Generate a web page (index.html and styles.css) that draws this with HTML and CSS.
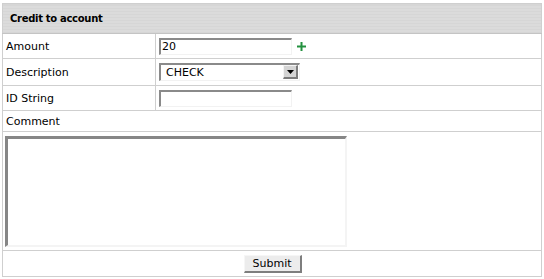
FILE: index.html
```html
<!DOCTYPE html>
<html>
  <head>
    <title>Credit to account</title>
    <link rel="stylesheet" href="styles.css">
  </head>
  <body>
    <form>
      <table class="credit">
        <tr class="head">
          <th colspan="2">Credit to account</th>
        </tr>
        <tr class="row">
          <td class="label"><label for="amount">Amount</label></td>
          <td>
            <input id="amount" class="field" name="amount" value="20" />
            <svg class="plus" width="9" height="9" viewBox="0 0 9 9"><path d="M3.5 0h2v3.5H9v2H5.5V9h-2V5.5H0v-2h3.5z" fill="#23913f"/></svg>
          </td>
        </tr>
        <tr class="row desc">
          <td class="label"><label for="description">Description</label></td>
          <td>
            <span class="select-wrap">
              <select id="description" name="description">
                <option>CHECK</option>
                <option>CASH</option>
              </select>
              <span class="arrow"><svg width="7" height="4" viewBox="0 0 7 4"><path d="M0 0h7L3.5 4z" fill="#000"/></svg></span>
            </span>
          </td>
        </tr>
        <tr class="row">
          <td class="label"><label for="idstring">ID String</label></td>
          <td><input id="idstring" class="field" name="idstring" /></td>
        </tr>
        <tr class="row small">
          <td class="label" colspan="2"><label for="comment">Comment</label></td>
        </tr>
        <tr class="area">
          <td colspan="2"><textarea id="comment" name="comment"></textarea></td>
        </tr>
        <tr class="row foot">
          <td colspan="2"><button type="button">Submit</button></td>
        </tr>
      </table>
    </form>
  </body>
</html>
```
FILE: styles.css
```css
* {
  font-family: "DejaVu Sans", Verdana, sans-serif;
  box-sizing: border-box;
}
body {
  margin: 3px 2px;
  background: #fff;
}
.credit {
  width: 540px;
  border-collapse: collapse;
  font-size: 11px;
  color: #000;
}
.credit td,
.credit th {
  border: 1px solid #cfcfcf;
  padding: 0;
  vertical-align: middle;
}
.head th {
  height: 30px;
  text-align: left;
  padding-left: 7px;
  font-size: 10px;
  font-weight: bold;
  letter-spacing: -0.3px;
  background: repeating-linear-gradient(to bottom, #d6d6d6 0, #d6d6d6 2px, #e0e0e0 2px, #e0e0e0 3px);
  border-bottom-color: #c4c4c4;
}
.row td {
  height: 25px;
}
.row.desc td {
  height: 27px;
}
.row.small td {
  height: 21px;
}
.label {
  width: 153px;
  padding-left: 3px !important;
}
.field {
  width: 133px;
  height: 17px;
  margin-left: 3px;
  padding: 0 1px;
  font-size: 11px;
  border-style: solid;
  border-width: 2px 1px 1px 2px;
  border-color: #8a8a8a #f2f2f2 #f2f2f2 #8a8a8a;
  vertical-align: middle;
  outline: none;
}
.plus {
  margin-left: 1px;
  vertical-align: middle;
}
.select-wrap {
  position: relative;
  display: inline-block;
  margin-left: 3px;
  vertical-align: middle;
}
.select-wrap select {
  appearance: none;
  -webkit-appearance: none;
  width: 141px;
  height: 18px;
  padding: 0 0 0 5px;
  font-size: 11px;
  background: #fff;
  color: #000;
  border-style: solid;
  border-width: 2px 1px 1px 2px;
  border-color: #8a8a8a #f2f2f2 #f2f2f2 #8a8a8a;
  border-radius: 0;
  outline: none;
  display: block;
}
.arrow {
  position: absolute;
  right: 2px;
  top: 2px;
  width: 15px;
  height: 14px;
  background: #d4d4d4;
  border-style: solid;
  border-width: 1px 2px 2px 1px;
  border-color: #f4f4f4 #7c7c7c #7c7c7c #f4f4f4;
  display: flex;
  align-items: center;
  justify-content: center;
  pointer-events: none;
}
.area td {
  height: 119px;
  padding: 4px 0 3px 2px;
  vertical-align: top;
}
textarea {
  display: block;
  width: 342px;
  height: 111px;
  resize: none;
  border-style: solid;
  border-width: 3px 2px 2px 3px;
  border-color: #868686 #f4f4f4 #f4f4f4 #868686;
  outline: none;
}
.foot td {
  height: 26px;
  text-align: center;
}
button {
  width: 58px;
  height: 18px;
  padding: 0;
  font-size: 11px;
  margin-left: 1px;
  background: #ececec;
  color: #000;
  border-style: solid;
  border-width: 1px 2px 2px 1px;
  border-color: #f6f6f6 #7e7e7e #7e7e7e #f6f6f6;
  vertical-align: middle;
}
```
